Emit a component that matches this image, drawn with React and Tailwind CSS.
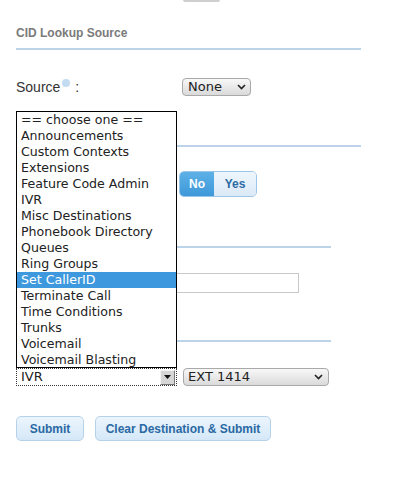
import React from 'react';

const options = [
  '== choose one ==',
  'Announcements',
  'Custom Contexts',
  'Extensions',
  'Feature Code Admin',
  'IVR',
  'Misc Destinations',
  'Phonebook Directory',
  'Queues',
  'Ring Groups',
  'Set CallerID',
  'Terminate Call',
  'Time Conditions',
  'Trunks',
  'Voicemail',
  'Voicemail Blasting',
];

const Chevron = () => (
  <svg width="9" height="6" viewBox="0 0 9 6" className="shrink-0">
    <polyline points="1,1 4.5,4.5 8,1" fill="none" stroke="#222" strokeWidth="1.6" />
  </svg>
);

const Rule = ({ width }) => <div className={`h-[2px] bg-[#bcd3ea] ${width}`}></div>;

const App = () => {
  const selected = 'Set CallerID';

  return (
    <div className="relative w-[402px] h-[480px] bg-white overflow-hidden font-['Liberation_Sans',Arial,sans-serif]">
      <div className="px-4">
        {/* leftover of button above */}
        <div className="ml-[167px] w-[37px] h-[2px] bg-[#cfcfcf] rounded-b"></div>

        <h2 className="mt-[23px] text-[12px] leading-4 font-bold text-[#7a7a7a]">CID Lookup Source</h2>
        <div className="mt-[7px]">
          <Rule width="w-[345px]" />
        </div>

        <div className="mt-[28px] flex items-center h-[18px]">
          <div className="w-[166px] flex items-center text-[14px] text-[#333]">
            <span>Source</span>
            <span className="ml-[2px] -mt-[8px] w-[8px] h-[8px] rounded-full bg-[#c3dcf2]"></span>
            <span className="ml-[5px]">:</span>
          </div>
          <div className="w-[69px] h-[18px] flex items-center justify-between pl-[5px] pr-[4px] border border-[#a9a9a9] rounded-[4px] bg-gradient-to-b from-[#f8f8f8] to-[#dadada] text-[13px] text-[#222] font-['DejaVu_Sans',sans-serif]">
            <span>None</span>
            <Chevron />
          </div>
        </div>

        <div className="mt-[49px]">
          <Rule width="w-[345px]" />
        </div>

        {/* label of this row sits under the open list */}
        <div className="mt-[24px] flex items-center h-[26px]">
          <div className="w-[163px]"></div>
          <div className="flex h-[26px] rounded-[5px] border border-[#9cc4e6] overflow-hidden text-[12px] font-bold">
            <div className="w-[34px] flex items-center justify-center bg-gradient-to-b from-[#5cb1e6] to-[#3e98d9] text-white">No</div>
            <div className="w-[42px] flex items-center justify-center bg-gradient-to-b from-[#eef6fd] to-[#dbeaf7] text-[#2d6ca4]">Yes</div>
          </div>
        </div>

        <div className="mt-[49px]">
          <Rule width="w-[315px]" />
        </div>

        <div className="mt-[25px] flex items-center h-[20px]">
          <div className="w-[140px]"></div>
          <div className="w-[143px] h-[20px] border border-[#c8c8c8] bg-white"></div>
        </div>

        <div className="mt-[47px]">
          <Rule width="w-[315px]" />
        </div>

        <div className="mt-[26px] flex items-center h-[18px] font-['DejaVu_Sans',sans-serif] text-[13px] text-[#222]">
          <div className="w-[161px] h-[18px] flex items-center justify-between border border-dotted border-[#333] pl-[4px] pr-[1px]">
            <span>IVR</span>
            <div className="w-[15px] h-[15px] flex items-center justify-center bg-[#d6d6d6] border-t border-l border-t-[#f4f4f4] border-l-[#f4f4f4] border-b border-r border-b-[#777] border-r-[#777]">
              <svg width="7" height="4" viewBox="0 0 7 4">
                <polygon points="0,0 7,0 3.5,4" fill="#111" />
              </svg>
            </div>
          </div>
          <div className="ml-[6px] w-[146px] h-[18px] flex items-center justify-between pl-[4px] pr-[5px] border border-[#a9a9a9] rounded-[4px] bg-gradient-to-b from-[#f8f8f8] to-[#dadada]">
            <span>EXT 1414</span>
            <Chevron />
          </div>
        </div>

        <div className="mt-[30px] flex gap-[11px] text-[12px] font-bold text-[#2a69a3]">
          <button className="w-[68px] h-[25px] rounded-[5px] border border-[#b6d2ea] bg-gradient-to-b from-[#ecf5fd] to-[#d5e8f8]">
            Submit
          </button>
          <button className="w-[176px] h-[25px] rounded-[5px] border border-[#b6d2ea] bg-gradient-to-b from-[#ecf5fd] to-[#d5e8f8]">
            Clear Destination &amp; Submit
          </button>
        </div>
      </div>

      {/* open select list */}
      <div className="absolute left-[16px] top-[111px] w-[161px] h-[257px] border border-black bg-white overflow-hidden font-['DejaVu_Sans',sans-serif] text-[12.6px] text-[#222]">
        {options.map((opt) => (
          <div
            key={opt}
            className={`h-[16px] leading-[16px] pl-[4px] whitespace-nowrap ${opt === selected ? 'bg-[#3d98dd] text-white' : ''}`}
          >
            {opt}
          </div>
        ))}
      </div>
    </div>
  );
};

export default App;
